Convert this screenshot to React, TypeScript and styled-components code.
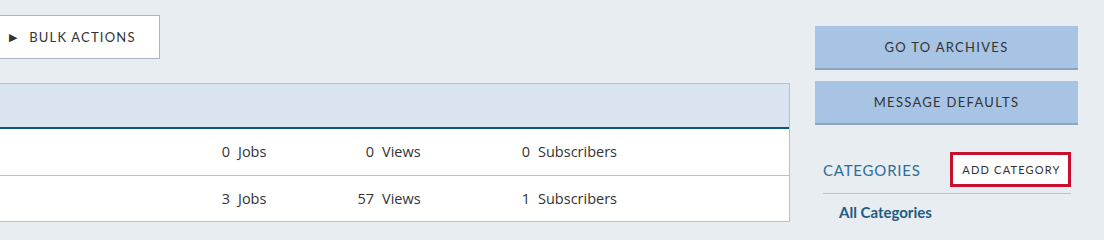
import React from 'react'
import styled, { createGlobalStyle } from 'styled-components'

const GlobalStyle = createGlobalStyle`
  html, body {
    margin: 0;
    padding: 0;
    background: #e8edf2;
    overflow: hidden;
  }
  body {
    font-family: "Lato", "Noto Sans", sans-serif;
    color: #333;
  }
`

const stats = [
  { jobs: 0, views: 0, subscribers: 0 },
  { jobs: 3, views: 57, subscribers: 1 },
]

const Stat: React.FC<{ value: number; label: string }> = ({ value, label }) => (
  <StyledStat>
    <StyledNum>{value}</StyledNum>
    <StyledLabel>{label}</StyledLabel>
  </StyledStat>
)

const App: React.FC = () => {
  return (
    <>
      <GlobalStyle />
      <StyledPage>
        <StyledMain>
          <StyledToolbar>
            <StyledBulkButton>
              <StyledArrow>▶</StyledArrow>
              BULK ACTIONS
            </StyledBulkButton>
          </StyledToolbar>
          <StyledTable>
            <StyledTableHead />
            {stats.map((s, i) => (
              <StyledRow key={i}>
                <div />
                <Stat value={s.jobs} label="Jobs" />
                <Stat value={s.views} label="Views" />
                <Stat value={s.subscribers} label="Subscribers" />
              </StyledRow>
            ))}
          </StyledTable>
        </StyledMain>
        <StyledSidebar>
          <StyledSideButton>GO TO ARCHIVES</StyledSideButton>
          <StyledSideButton>MESSAGE DEFAULTS</StyledSideButton>
          <StyledCatHeader>
            <StyledCatTitle>CATEGORIES</StyledCatTitle>
            <StyledAddButton>ADD CATEGORY</StyledAddButton>
          </StyledCatHeader>
          <StyledCatLink>All Categories</StyledCatLink>
        </StyledSidebar>
      </StyledPage>
    </>
  )
}

const StyledPage = styled.div`
  display: flex;
  align-items: flex-start;
  gap: 25px;
  margin-left: -20px;
`

const StyledMain = styled.div`
  width: 810px;
  flex-shrink: 0;
`

const StyledToolbar = styled.div`
  display: flex;
  height: 83px;
  padding-top: 15px;
  box-sizing: border-box;
`

const StyledBulkButton = styled.button`
  display: flex;
  align-items: center;
  height: 44px;
  width: 180px;
  padding: 0 0 0 28px;
  box-sizing: border-box;
  background: #fff;
  border: 1px solid #a9b5c4;
  font-family: "Lato", "Noto Sans", sans-serif;
  font-size: 13px;
  letter-spacing: 1.2px;
  color: #333;
`

const StyledArrow = styled.span`
  font-size: 11px;
  margin-right: 11px;
  color: #333;
`

const StyledTable = styled.div`
  background: #fff;
  border: 1px solid #b4c0ce;
  border-bottom: none;
`

const StyledTableHead = styled.div`
  height: 43px;
  background: #dae4f0;
  border-bottom: 2px solid #0b5587;
`

const StyledRow = styled.div`
  display: grid;
  grid-template-columns: 199px 144px 156px 1fr;
  align-items: center;
  height: 45.5px;
  border-bottom: 1px solid #b8c2ce;
  font-family: "Open Sans", "Noto Sans", sans-serif;
  font-size: 14.5px;
  color: #333;
`

const StyledStat = styled.div`
  display: flex;
  align-items: baseline;
`

const StyledNum = styled.span`
  width: 50px;
  text-align: right;
`

const StyledLabel = styled.span`
  margin-left: 8px;
`

const StyledSidebar = styled.div`
  width: 263px;
  flex-shrink: 0;
  padding-top: 26px;
  display: flex;
  flex-direction: column;
`

const StyledSideButton = styled.button`
  height: 44px;
  margin-bottom: 11px;
  background: #a7c4e4;
  border: none;
  border-bottom: 2px solid #8ca5bf;
  font-family: "Lato", "Noto Sans", sans-serif;
  font-size: 13px;
  letter-spacing: 1.3px;
  color: #333;
  padding: 0;
`

const StyledCatHeader = styled.div`
  display: flex;
  align-items: center;
  justify-content: space-between;
  margin: 16px 7px 0 8px;
  padding-bottom: 6px;
  border-bottom: 1px solid #b8c3cf;
`

const StyledCatTitle = styled.h3`
  margin: 0;
  font-size: 15px;
  font-weight: 400;
  letter-spacing: 0.8px;
  color: #2f6c96;
`

const StyledAddButton = styled.button`
  width: 121px;
  height: 35px;
  padding: 0 0 0 2px;
  background: #fff;
  border: 3px solid #c8102e;
  font-family: "Lato", "Noto Sans", sans-serif;
  font-size: 11px;
  letter-spacing: 1.2px;
  color: #333;
`

const StyledCatLink = styled.a`
  display: block;
  margin: 9px 0 0 24px;
  font-size: 15px;
  font-weight: 700;
  color: #1d5b85;
  text-decoration: none;
`

export default App
